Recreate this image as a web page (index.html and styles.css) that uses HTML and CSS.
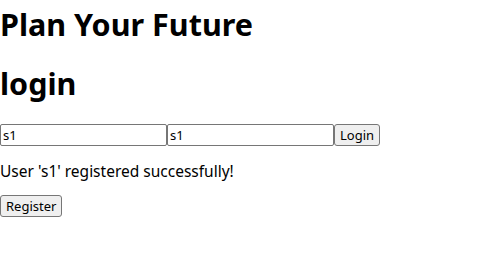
FILE: index.html
```html
<!DOCTYPE html>
<html lang="en">
<head>
    <meta charset="UTF-8">
    <title>Plan Your Future</title>
    <link rel="stylesheet" href="styles.css">
</head>
<body>
    <h1 class="title">Plan Your Future</h1>
    <h1 class="title">login</h1>
    <form class="login-form">
        <input type="text" class="field" value="s1"><input type="text" class="field" value="s1"><button type="submit" class="btn">Login</button>
    </form>
    <p class="message">User 's1' registered successfully!</p>
    <button class="btn">Register</button>
</body>
</html>
```

FILE: styles.css
```css
body {
    margin: 0;
    font-family: "Noto Sans", "Open Sans", sans-serif;
    color: #000;
    background: #fff;
}

.title {
    font-size: 30.5px;
    font-weight: 700;
    line-height: 37px;
    margin: 6px 0 22px;
}

.login-form {
    display: flex;
    align-items: center;
    margin-top: 21px;
}

.field {
    box-sizing: border-box;
    width: 167px;
    height: 22px;
    padding: 1px 2px;
    border: 1px solid #767676;
    border-radius: 2px;
    font-family: inherit;
    font-size: 13px;
    color: #000;
}

.btn {
    box-sizing: border-box;
    height: 22px;
    padding: 0 5px;
    border: 1px solid #767676;
    border-radius: 3px;
    background: #efefef;
    font-family: inherit;
    font-size: 13px;
    color: #000;
}

.message {
    font-size: 15.5px;
    line-height: 22px;
    margin: 14px 0 12px;
}
```
